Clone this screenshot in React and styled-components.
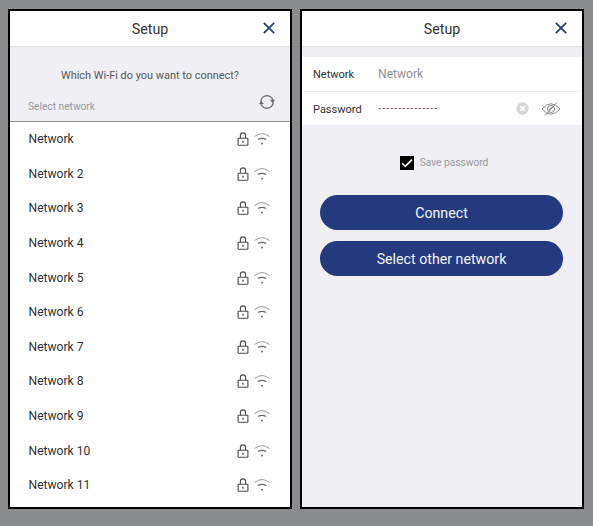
import styled, { createGlobalStyle } from "styled-components";

const networks = [
    "Network",
    "Network 2",
    "Network 3",
    "Network 4",
    "Network 5",
    "Network 6",
    "Network 7",
    "Network 8",
    "Network 9",
    "Network 10",
    "Network 11",
];

const CloseIcon = () => (
    <svg width="12" height="12" viewBox="0 0 12 12" fill="none" stroke="#233a7c" strokeWidth="1.7">
        <path d="M0.8 0.8 11.2 11.2M11.2 0.8 0.8 11.2" />
    </svg>
)

const RefreshIcon = () => (
    <svg width="16" height="16" viewBox="0 0 16 16" fill="none" stroke="#77777b" strokeWidth="1.5">
        <path d="M1.8 7.6A6.2 6.2 0 0 1 14 6.4M14.2 8.4A6.2 6.2 0 0 1 2 9.6" />
        <path d="M11 5.8h5L13.8 9.2zM0 10h5L2.1 6.8z" fill="#6c6c70" stroke="none" />
    </svg>
)

const LockIcon = () => (
    <svg width="12" height="14" viewBox="0 0 12 14" fill="none" stroke="#4c4c4c" strokeWidth="1.1">
        <path d="M3.4 6.2V3.5a2.6 2.6 0 0 1 5.2 0v2.7" />
        <rect x="1.1" y="6.2" width="9.8" height="7" rx="0.4" />
        <path d="M6 8.8v2" strokeWidth="1.3" />
    </svg>
)

const WifiIcon = () => (
    <svg width="16" height="14" viewBox="0 0 16 14" fill="none">
        <path d="M0.5 4.5Q8-1.3 15.5 4.5" stroke="#999" />
        <path d="M3.9 7.6Q8 5 12.1 7.6" stroke="#666" strokeWidth="1.2" />
        <circle cx="8" cy="11.6" r="0.9" fill="#555" />
    </svg>
)

const ClearIcon = () => (
    <svg width="13" height="13" viewBox="0 0 13 13">
        <circle cx="6.5" cy="6.5" r="6.2" fill="#d7d7d7" />
        <path d="M4.2 4.2 8.8 8.8M8.8 4.2 4.2 8.8" stroke="#fff" strokeWidth="1.7" />
    </svg>
)

const EyeOffIcon = () => (
    <svg width="20" height="14" viewBox="0 0 20 14" fill="none" stroke="#777" strokeWidth="0.9">
        <path d="M1 7Q10-4.6 19 7Q10 18.6 1 7z" transform="translate(0 .7) scale(1 .9)" />
        <circle cx="10" cy="7" r="3.5" />
        <path d="M8.5 8.2Q8.6 5.6 11.4 5.6M4.2 13.6 15.8 0.4" />
    </svg>
)

const CheckIcon = () => (
    <svg width="14" height="14" viewBox="0 0 14 14" fill="none" stroke="#fff" strokeWidth="1.6">
        <path d="M2.2 7.2 5.3 10.3 12 3.6" />
    </svg>
)

const Header = () => (
    <TitleBar>
        <Title>Setup</Title>
        <CloseButton aria-label="Close">
            <CloseIcon />
        </CloseButton>
    </TitleBar>
)

const App = () => {
    return (
        <Page>
            <GlobalStyle />
            <Screen>
                <Header />
                <Intro>
                    <Question>Which Wi-Fi do you want to connect?</Question>
                    <SelectRow>
                        <span>Select network</span>
                        <RefreshIcon />
                    </SelectRow>
                </Intro>
                <List>
                    {networks.map((name) => (
                        <Item key={name}>
                            <span>{name}</span>
                            <Signals>
                                <LockIcon />
                                <WifiIcon />
                            </Signals>
                        </Item>
                    ))}
                </List>
            </Screen>
            <Screen>
                <Header />
                <Form>
                    <Field>
                        <Label>Network</Label>
                        <Value>Network</Value>
                    </Field>
                    <Field $divided>
                        <Label>Password</Label>
                        <Secret>---------------</Secret>
                        <FieldIcons>
                            <ClearIcon />
                            <EyeOffIcon />
                        </FieldIcons>
                    </Field>
                </Form>
                <Save>
                    <Checkbox>
                        <CheckIcon />
                    </Checkbox>
                    <span>Save password</span>
                </Save>
                <Actions>
                    <Button>Connect</Button>
                    <Button>Select other network</Button>
                </Actions>
            </Screen>
        </Page>
    )
}

const GlobalStyle = createGlobalStyle`
    * {
        box-sizing: border-box;
    }

    body {
        margin: 0;
        background-color: #8a8c8e;
        font-family: Roboto, "Liberation Sans", sans-serif;
    }
`;

const Page = styled.div`
    display: flex;
    gap: 8px;
    height: 526px;
    padding: 9px 9px 17px 8px;
`;

const Screen = styled.section`
    display: flex;
    flex-direction: column;
    width: 284px;
    height: 500px;
    border: 2px solid #000;
    background-color: #efeff4;
    overflow: hidden;
`;

const TitleBar = styled.header`
    display: grid;
    grid-template-columns: 1fr auto 1fr;
    align-items: center;
    flex: none;
    height: 36px;
    padding: 0 15px 0 15px;
    background-color: #fff;
    border-bottom: 1px solid #dededf;
`;

const Title = styled.h1`
    grid-column: 2;
    margin: 0;
    font-size: 14.2px;
    font-weight: 400;
    line-height: 20px;
    color: #333;
`;

const CloseButton = styled.button`
    display: flex;
    justify-self: end;
    padding: 0;
    margin-top: -1px;
    border: 0;
    background: none;
`;

const Intro = styled.div`
    flex: none;
    height: 75px;
    padding: 21px 15px 0 18px;
    border-bottom: 1px solid #8e8e90;
`;

const Question = styled.p`
    margin: 0;
    padding-right: 3px;
    font-size: 10.95px;
    line-height: 16px;
    text-align: center;
    color: #58585c;
`;

const SelectRow = styled.div`
    display: flex;
    justify-content: space-between;
    margin-top: 10px;
    font-size: 10.2px;
    line-height: 26px;
    color: #98989d;
`;

const List = styled.ul`
    flex: 1;
    margin: 0;
    padding: 0;
    list-style: none;
    background-color: #fff;
`;

const Item = styled.li`
    display: flex;
    align-items: center;
    justify-content: space-between;
    height: 34.6px;
    padding: 0 20px 0 18.5px;
    font-size: 12.1px;
    color: #303030;
`;

const Signals = styled.div`
    display: flex;
    gap: 5px;
`;

const Form = styled.div`
    flex: none;
    margin-top: 10px;
    background-color: #fff;
`;

const Field = styled.div`
    display: flex;
    align-items: center;
    height: 34px;
    padding: 0 21px 0 11px;
    border-top: ${(props) => (props.$divided ? "1px solid #ededee" : "0")};
`;

const Label = styled.span`
    width: 65px;
    padding-top: 1px;
    font-size: 11px;
    color: #303030;
`;

const Value = styled.span`
    font-size: 12.1px;
    color: #929294;
`;

const Secret = styled.span`
    font-size: 10px;
    font-weight: 500;
    letter-spacing: 0.6px;
    color: #77777a;
`;

const FieldIcons = styled.div`
    display: flex;
    align-items: center;
    gap: 12px;
    margin-left: auto;
`;

const Save = styled.div`
    display: flex;
    align-items: center;
    align-self: center;
    gap: 6px;
    margin: 30px 0 25px 4px;
    font-size: 10.2px;
    line-height: 14px;
    color: #98989d;

    & > span:last-child {
        padding-top: 1px;
    }
`;

const Checkbox = styled.span`
    display: flex;
    width: 14px;
    height: 14px;
    background-color: #000;
`;

const Actions = styled.div`
    display: flex;
    flex-direction: column;
    gap: 11px;
    padding: 0 19px 0 18px;
`;

const Button = styled.button`
    height: 35px;
    padding: 1px 0 0;
    border: 0;
    border-radius: 18px;
    background-color: #243a7e;
    font-family: inherit;
    font-size: 14.2px;
    color: #f4f6fc;
`;

export default App
